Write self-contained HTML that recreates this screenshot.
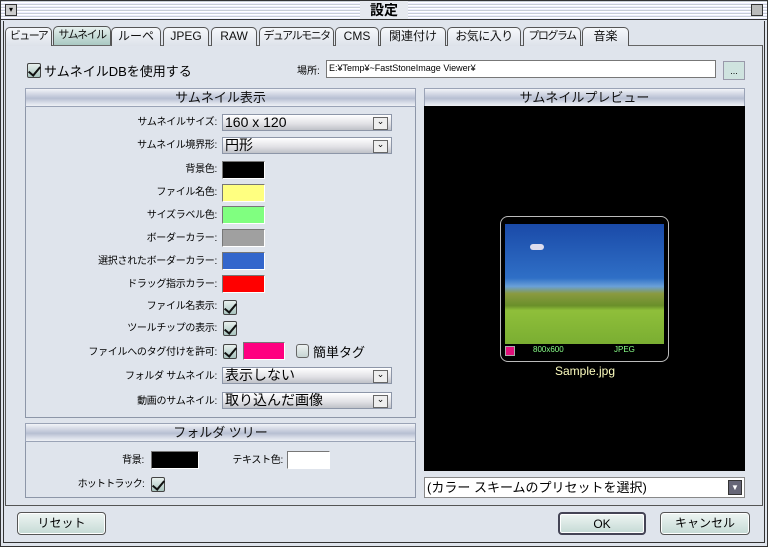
<!DOCTYPE html>
<html><head><meta charset="utf-8"><style>
*{margin:0;padding:0;box-sizing:border-box}
body{width:768px;height:547px;background:#dfe4ec;font-family:"Liberation Sans","Noto Sans CJK JP",sans-serif;font-size:11px;color:#000;position:relative;overflow:hidden}
.a{position:absolute;white-space:nowrap}
.frame{left:0;top:0;width:768px;height:547px;border:1px solid #333;}
.title{left:1px;top:1px;width:766px;height:19px;background:repeating-linear-gradient(#c8cdd6 0 1px,#fff 1px 2px,#eef 2px 3px);border-bottom:1px solid #333}
.ttext{left:360px;top:1px;width:48px;height:18px;background:#e6e9ef;text-align:center;font-size:14px;font-weight:bold;line-height:18px}
.tab{top:27px;height:19px;border:1px solid #555;border-bottom:none;border-radius:5px 5px 0 0;background:linear-gradient(#f6f8fb,#dde2ea);text-align:center;font-size:12px;line-height:17px;color:#111;overflow:hidden}
.tab.n{font-size:11px;letter-spacing:-1.5px}
.tab.sel{background:linear-gradient(#e6f0ee,#a9c8c2);top:26px}
.panel{left:5px;top:45px;width:758px;height:461px;border:1px solid #555;border-top:1px solid #666}
.hdr{height:19px;background:linear-gradient(#f2f4f8,#b7bfd2 55%,#d8dde8 80%,#eef0f5);border:1px solid #9aa3b6;text-align:center;font-size:13px;line-height:18px;color:#111}
.grp{border:1px solid #8d96a8;background:#dfe4ec}
.lbl{text-align:right;width:200px;font-size:10px;line-height:14px;letter-spacing:-0.3px}
.dd{height:17px;width:170px;border:1px solid #8d96a8;background:linear-gradient(#fff,#e0e0e4 60%,#bfc2c8);font-size:14px;line-height:15px;padding-left:2px}
.dd:after{content:"⌄";position:absolute;right:3px;top:2px;width:13px;height:11px;border:1px solid #666;background:#eee;font-size:9px;line-height:6px;text-align:center}
.sw{width:43px;height:18px;border:1px solid #777;border-right-color:#fff;border-bottom-color:#fff}
.cb{width:14px;height:15px;border:1px solid #444;border-radius:2px;background:linear-gradient(#e8f0ee,#a9c4be)}
.cb:after{content:"";position:absolute;left:3px;top:0px;width:5px;height:10px;border:solid #111;border-width:0 2px 2px 0;transform:rotate(40deg)}
.btn{height:23px;border:1px solid #555;border-radius:4px;background:linear-gradient(#eef5f3,#c5dad5);text-align:center;font-size:12px;line-height:21px;box-shadow:inset 0 0 0 1px #fff}
</style></head><body>
<div class="a frame"></div>
<div class="a title"></div>
<div class="a" style="left:5px;top:4px;width:12px;height:12px;border:1px solid #333;background:#ccc;font-size:8px;line-height:9px;text-align:center">▾</div>
<div class="a" style="left:751px;top:4px;width:12px;height:12px;border:1px solid #333;background:#bbb"></div>
<div class="a ttext">設定</div>
<div class="a" style="left:3px;top:21px;width:1px;height:522px;background:#333"></div>
<div class="a" style="left:764px;top:21px;width:1px;height:522px;background:#333"></div>
<div class="a" style="left:3px;top:542px;width:762px;height:1px;background:#333"></div>

<div class="a panel"></div>
<div class="a tab n" style="left:5px;width:47px">ビューア</div>
<div class="a tab sel n" style="left:53px;width:58px">サムネイル</div>
<div class="a tab" style="left:111px;width:50px">ルーペ</div>
<div class="a tab" style="left:163px;width:46px">JPEG</div>
<div class="a tab" style="left:211px;width:46px">RAW</div>
<div class="a tab n" style="left:259px;width:75px">デュアルモニタ</div>
<div class="a tab" style="left:335px;width:44px">CMS</div>
<div class="a tab" style="left:380px;width:66px">関連付け</div>
<div class="a tab" style="left:447px;width:74px;letter-spacing:-0.5px">お気に入り</div>
<div class="a tab n" style="left:523px;width:58px">プログラム</div>
<div class="a tab" style="left:582px;width:47px">音楽</div>

<div class="a cb" style="left:27px;top:63px"></div>
<div class="a" style="left:44px;top:61px;font-size:13px">サムネイルDBを使用する</div>
<div class="a" style="left:297px;top:62px;font-size:10px">場所:</div>
<div class="a" style="left:326px;top:60px;width:390px;height:18px;background:#fff;border:1px solid #777;font-size:9px;line-height:15px;padding-left:2px">E:¥Temp¥~FastStoneImage Viewer¥</div>
<div class="a" style="left:723px;top:61px;width:22px;height:19px;border:1px solid #99a;background:#cfe3df;text-align:center;font-size:9px;line-height:18px">...</div>

<div class="a grp" style="left:25px;top:88px;width:391px;height:330px"></div>
<div class="a hdr" style="left:25px;top:88px;width:391px">サムネイル表示</div>

<div class="a lbl" style="left:17px;top:116px">サムネイルサイズ:</div>
<div class="a dd" style="left:222px;top:114px">160 x 120</div>
<div class="a lbl" style="left:17px;top:139px">サムネイル境界形:</div>
<div class="a dd" style="left:222px;top:137px">円形</div>
<div class="a lbl" style="left:17px;top:163px">背景色:</div>
<div class="a sw" style="left:222px;top:161px;background:#000"></div>
<div class="a lbl" style="left:17px;top:186px">ファイル名色:</div>
<div class="a sw" style="left:222px;top:184px;background:#ffff80"></div>
<div class="a lbl" style="left:17px;top:209px">サイズラベル色:</div>
<div class="a sw" style="left:222px;top:206px;background:#80ff80"></div>
<div class="a lbl" style="left:17px;top:232px">ボーダーカラー:</div>
<div class="a sw" style="left:222px;top:229px;background:#a0a0a0"></div>
<div class="a lbl" style="left:17px;top:255px">選択されたボーダーカラー:</div>
<div class="a sw" style="left:222px;top:252px;background:#3366cc"></div>
<div class="a lbl" style="left:17px;top:278px">ドラッグ指示カラー:</div>
<div class="a sw" style="left:222px;top:275px;background:#ff0000"></div>
<div class="a lbl" style="left:17px;top:300px">ファイル名表示:</div>
<div class="a cb" style="left:223px;top:300px"></div>
<div class="a lbl" style="left:17px;top:322px">ツールチップの表示:</div>
<div class="a cb" style="left:223px;top:321px"></div>
<div class="a lbl" style="left:17px;top:346px">ファイルへのタグ付けを許可:</div>
<div class="a cb" style="left:223px;top:344px"></div>
<div class="a sw" style="left:243px;top:342px;background:#ff0080;width:42px"></div>
<div class="a" style="left:296px;top:344px;width:13px;height:14px;border:1px solid #666;border-radius:3px;background:linear-gradient(#eef2f2,#c6d4d2)"></div>
<div class="a" style="left:313px;top:342px;font-size:13px">簡単タグ</div>
<div class="a lbl" style="left:17px;top:370px">フォルダ サムネイル:</div>
<div class="a dd" style="left:222px;top:367px">表示しない</div>
<div class="a lbl" style="left:17px;top:395px">動画のサムネイル:</div>
<div class="a dd" style="left:222px;top:392px">取り込んだ画像</div>

<div class="a grp" style="left:25px;top:423px;width:391px;height:75px"></div>
<div class="a hdr" style="left:25px;top:423px;width:391px">フォルダ ツリー</div>
<div class="a lbl" style="left:-56px;top:454px">背景:</div>
<div class="a sw" style="left:151px;top:451px;width:48px;background:#000"></div>
<div class="a lbl" style="left:83px;top:454px">テキスト色:</div>
<div class="a sw" style="left:287px;top:451px;width:43px;background:#fff"></div>
<div class="a lbl" style="left:-56px;top:478px;letter-spacing:-0.8px">ホットトラック:</div>
<div class="a cb" style="left:151px;top:477px"></div>

<div class="a hdr" style="left:424px;top:88px;width:321px">サムネイルプレビュー</div>
<div class="a" style="left:424px;top:106px;width:321px;height:365px;background:#000"></div>
<div class="a" style="left:500px;top:216px;width:169px;height:146px;border:1px solid #bbb;border-radius:8px"></div>
<div class="a" style="left:505px;top:224px;width:159px;height:120px;background:linear-gradient(#1a4aa8 0%,#2f6fc6 45%,#6aa0d8 52%,#8a9a40 58%,#6a8f2a 68%,#8fbf3a 72%,#7aae32 100%)"></div>
<div class="a" style="left:530px;top:244px;width:14px;height:6px;background:#dde;border-radius:4px"></div>
<div class="a" style="left:505px;top:346px;width:10px;height:10px;background:#e0107a;border:1px solid #aaa"></div>
<div class="a" style="left:533px;top:345px;color:#8f8;font-size:8px">800x600</div>
<div class="a" style="left:614px;top:345px;color:#8f8;font-size:8px">JPEG</div>
<div class="a" style="left:540px;top:364px;width:90px;text-align:center;color:#ffffc0;font-size:12px">Sample.jpg</div>

<div class="a" style="left:424px;top:477px;width:321px;height:21px;background:#fff;border:1px solid #888;font-size:13px;line-height:19px;padding-left:2px">(カラー スキームのプリセットを選択)</div>
<div class="a" style="left:728px;top:480px;width:14px;height:15px;background:#667;border:1px solid #333;color:#fff;font-size:8px;text-align:center;line-height:13px">▼</div>

<div class="a btn" style="left:17px;top:512px;width:89px">リセット</div>
<div class="a btn" style="left:558px;top:512px;width:88px;border:2px solid #445">OK</div>
<div class="a btn" style="left:660px;top:512px;width:90px">キャンセル</div>
</body></html>
